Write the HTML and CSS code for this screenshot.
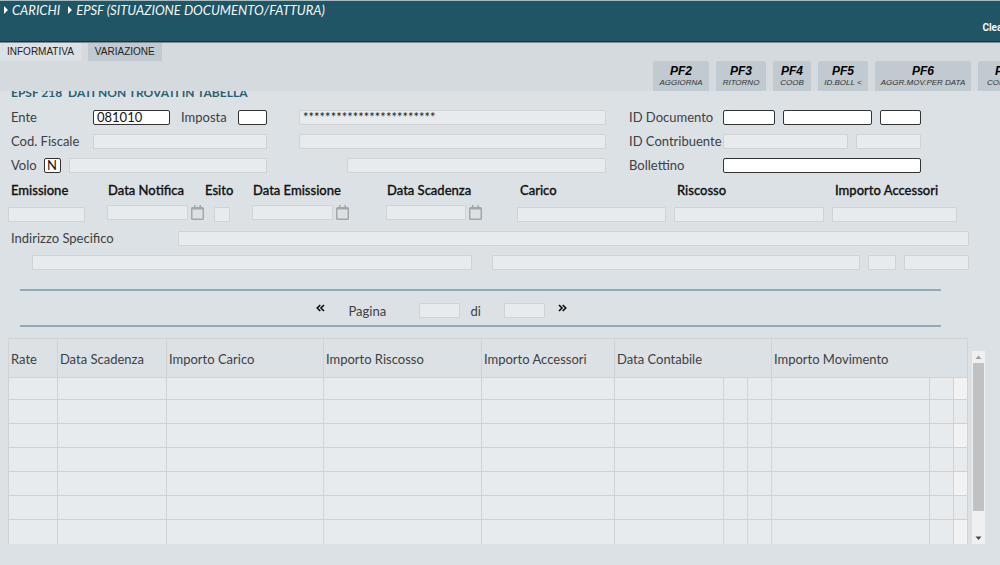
FILE: index.html
```
<!DOCTYPE html>
<html lang="it">
<head>
<meta charset="utf-8">
<title>EPSF - Situazione documento/fattura</title>
<link rel="stylesheet" href="styles.css">
</head>
<body>
<svg class="defs" aria-hidden="true">
  <symbol id="cal" viewBox="0 0 13 15">
    <path d="M3 0h1.500v2h4V0H10v2h1.500q1.500 0 1.500 1.500v10q0 1.500-1.500 1.500h-10Q0 15 0 13.500v-10Q0 2 1.500 2H3zM1.500 4.600v8.900h10V4.600z" fill="#a3a7aa" fill-rule="evenodd"/>
  </symbol>
  <symbol id="chev" viewBox="0 0 9 8">
    <path d="M4.300 1L1.300 4l3 3M8 1L5 4l3 3" fill="none" stroke="#111" stroke-width="1.700"/>
  </symbol>
</svg>

<header class="top">
  <nav class="crumbs" aria-label="Percorso">
    <span class="crumb">CARICHI</span>
    <span class="crumb">EPSF (SITUAZIONE DOCUMENTO/FATTURA)</span>
  </nav>
  <button class="clear" type="button">Clear</button>
</header>

<div class="band">
  <div class="tabs">
    <button class="tab active" type="button">INFORMATIVA</button>
    <button class="tab" type="button">VARIAZIONE</button>
  </div>
  <div class="keys">
    <button class="key k56" type="button"><b>PF2</b><span>AGGIORNA</span></button>
    <button class="key k50" type="button"><b>PF3</b><span>RITORNO</span></button>
    <button class="key k38" type="button"><b>PF4</b><span>COOB</span></button>
    <button class="key k50" type="button"><b>PF5</b><span>ID.BOLL &lt;</span></button>
    <button class="key k96" type="button"><b>PF6</b><span>AGGR.MOV.PER DATA</span></button>
    <button class="key k56" type="button"><b>PF7</b><span>CONTRIB.</span></button>
  </div>
</div>

<main class="content">
  <h1 class="message">EPSF 218 &nbsp;DATI NON TROVATI IN TABELLA</h1>

  <form class="form">
    <div class="search">
      <div class="cell left">
        <label class="wide-label" for="ente">Ente</label>
        <input class="f77 edit" id="ente" value="081010">
        <label class="imposta" for="imposta">Imposta</label>
        <input class="f29 edit" id="imposta">
      </div>
      <div class="cell mid"><input class="grow" aria-label="Descrizione imposta" value="************************" readonly></div>
      <div class="cell right">
        <label class="right-label" for="doc1">ID Documento</label>
        <input class="f52 edit" id="doc1">
        <input class="grow edit" aria-label="Numero documento">
        <input class="f41 edit" aria-label="Progressivo documento">
      </div>

      <div class="cell left">
        <label class="wide-label" for="cf">Cod. Fiscale</label>
        <input class="grow" id="cf" readonly>
      </div>
      <div class="cell mid"><input class="grow" aria-label="Nominativo" readonly></div>
      <div class="cell right">
        <label class="right-label" for="contr">ID Contribuente</label>
        <input class="grow" id="contr" readonly>
        <input class="f65" aria-label="Codice contribuente" readonly>
      </div>

      <div class="cell left">
        <label class="volo" for="volo">Volo</label>
        <input class="f17 edit" id="volo" value="N">
        <input class="grow" aria-label="Descrizione volo" readonly>
      </div>
      <div class="cell mid indent"><input class="grow" aria-label="Dettaglio volo" readonly></div>
      <div class="cell right">
        <label class="right-label" for="boll">Bollettino</label>
        <input class="grow edit" id="boll">
      </div>
    </div>

    <div class="totals">
      <div class="field low"><label for="em">Emissione</label><div class="box trail-22"><input class="grow" id="em" readonly></div></div>
      <div class="field date"><label for="dn">Data Notifica</label><div class="box"><input class="grow" id="dn" readonly><svg class="cal"><use href="#cal"/></svg></div></div>
      <div class="field low esito"><label for="es">Esito</label><div class="box trail-22"><input class="grow" id="es" readonly></div></div>
      <div class="field date"><label for="de">Data Emissione</label><div class="box trail-37"><input class="grow" id="de" readonly><svg class="cal"><use href="#cal"/></svg></div></div>
      <div class="field date"><label for="ds">Data Scadenza</label><div class="box trail-35"><input class="grow" id="ds" readonly><svg class="cal"><use href="#cal"/></svg></div></div>
      <div class="field low"><label for="ca">Carico</label><div class="box trail-8"><input class="grow" id="ca" readonly></div></div>
      <div class="field low"><label for="ri">Riscosso</label><div class="box trail-8"><input class="grow" id="ri" readonly></div></div>
      <div class="field low"><label for="ia">Importo Accessori</label><div class="box"><input class="grow" id="ia" readonly></div></div>
    </div>

    <div class="address">
      <label for="ind">Indirizzo Specifico</label>
      <input class="grow" id="ind" readonly>
    </div>
    <div class="address second">
      <input class="street" aria-label="Indirizzo" readonly>
      <input class="city" aria-label="Comune" readonly>
      <input class="f28" aria-label="Provincia" readonly>
      <input class="f65" aria-label="CAP" readonly>
    </div>
  </form>

  <div class="pager">
    <button class="arrow" type="button" aria-label="Pagina precedente"><svg><use href="#chev"/></svg></button>
    <label class="pag" for="pag">Pagina</label><input class="f41" id="pag" readonly>
    <label class="di" for="tot">di</label><input class="f41" id="tot" readonly>
    <button class="arrow next" type="button" aria-label="Pagina successiva"><svg><use href="#chev"/></svg></button>
  </div>

  <div class="grid">
    <table class="rates">
      <colgroup>
        <col style="width:5.100%"><col style="width:11.370%"><col style="width:16.370%"><col style="width:16.480%"><col style="width:13.870%">
        <col style="width:11.370%"><col style="width:2.500%"><col style="width:2.500%"><col style="width:16.480%"><col style="width:2.500%"><col style="width:1.460%">
      </colgroup>
      <thead>
        <tr><th>Rate</th><th>Data Scadenza</th><th>Importo Carico</th><th>Importo Riscosso</th><th>Importo Accessori</th><th colspan="3">Data Contabile</th><th colspan="3">Importo Movimento</th></tr>
      </thead>
      <tbody>
        <tr><td></td><td></td><td></td><td></td><td></td><td></td><td></td><td></td><td></td><td></td><td></td></tr>
        <tr><td></td><td></td><td></td><td></td><td></td><td></td><td></td><td></td><td></td><td></td><td></td></tr>
        <tr><td></td><td></td><td></td><td></td><td></td><td></td><td></td><td></td><td></td><td></td><td></td></tr>
        <tr><td></td><td></td><td></td><td></td><td></td><td></td><td></td><td></td><td></td><td></td><td></td></tr>
        <tr><td></td><td></td><td></td><td></td><td></td><td></td><td></td><td></td><td></td><td></td><td></td></tr>
        <tr><td></td><td></td><td></td><td></td><td></td><td></td><td></td><td></td><td></td><td></td><td></td></tr>
        <tr><td></td><td></td><td></td><td></td><td></td><td></td><td></td><td></td><td></td><td></td><td></td></tr>
      </tbody>
    </table>
    <div class="scroll" aria-hidden="true">
      <svg class="tri" viewBox="0 0 13 12"><path d="M3.500 8L6.500 4.500 9.500 8z" fill="#a0a0a0"/></svg>
      <div class="track"><div class="thumb"></div></div>
      <svg class="tri" viewBox="0 0 13 12"><path d="M3.500 4.500L6.500 8 9.500 4.500z" fill="#484848"/></svg>
    </div>
  </div>
</main>
</body>
</html>
```
FILE: styles.css
```
* { box-sizing: border-box; }

body {
  margin: 0;
  overflow: hidden;
  background: #dce1e5;
  color: #3c4043;
  font: 13px/16px Lato, "Open Sans", sans-serif;
}

button { border: 0; padding: 0; background: none; color: inherit; font: inherit; white-space: nowrap; }

.defs { display: none; }

/* header */
.top {
  display: flex;
  justify-content: space-between;
  height: 43px;
  border-top: 1px solid #a9b9bd;
  border-bottom: 1px solid #7f8a90;
  background: #205565;
  box-shadow: inset 0 -1px #123642;
  color: #f4f7f8;
}
.crumbs { display: flex; gap: 8px; padding: 1px 0 0 4px; font-style: italic; }
.crumb { display: flex; align-items: center; gap: 4px; height: 16px; }
.crumb::before {
  content: "";
  border-left: 4px solid #fff;
  border-top: 4px solid transparent;
  border-bottom: 4px solid transparent;
}
.clear { margin: 19px -6px 0 0; height: 16px; font: bold 10px/16px Roboto, sans-serif; }

/* tabs and function keys */
.band { background: #d5dade; }
.tabs { display: flex; gap: 7px; height: 18px; }
.tab {
  height: 18px;
  padding: 0 7px;
  background: #c1c9d1;
  color: #222;
  font: 10px/18px "Liberation Sans", sans-serif;
}
.tab.active { background: #dce1e5; }
.keys { display: flex; justify-content: flex-end; gap: 7px; margin-right: -34px; }
.key {
  display: flex;
  flex: none;
  flex-direction: column;
  align-items: center;
  height: 30px;
  padding-top: 3px;
  border-radius: 3px 3px 0 0;
  background: #c1c9d1;
  color: #333;
  font: italic 8px/10px "Liberation Sans", sans-serif;
}
.key b { color: #000; font-size: 12px; line-height: 14px; }
.k38 { width: 38px; }
.k50 { width: 50px; }
.k56 { width: 56px; }
.k96 { width: 96px; }

/* form */
.content { overflow: hidden; }
.message {
  margin: -6px 0 0 11px;
  color: #2c5f70;
  font-size: 12px;
  font-weight: bold;
  line-height: 16px;
}
input {
  min-width: 0;
  height: 15px;
  padding: 0 3px;
  border: 1px solid #d0d2d3;
  border-radius: 1px;
  background: #e7ebee;
  color: #222;
  font: 13px/13px Lato, "Open Sans", sans-serif;
}
input.edit { border-color: #333; border-radius: 2px; background: #fff; color: #111; }
.grow { flex: 1 1 0; width: 0; }
.f17 { width: 17px; padding: 0 2px; }
.f28 { width: 28px; }
.f29 { width: 29px; }
.f41 { width: 41px; }
.f52 { width: 52px; }
.f65 { width: 65px; }
.f77 { width: 77px; }

.form { padding: 4px 31px 0 11px; }
.search {
  display: grid;
  grid-template-columns: 256fr 316fr 292fr;
  gap: 0 23px;
  padding-right: 48px;
}
.cell { display: flex; align-items: center; height: 24px; }
.left .wide-label { width: 82px; }
.imposta { width: 57px; margin-left: auto; }
.volo { width: 33px; }
.left .f17 { margin-right: 8px; }
.mid { padding-left: 9px; }
.mid.indent { padding-left: 57px; }
.right { gap: 8px; }
.right-label { width: 86px; white-space: nowrap; }

.totals {
  display: grid;
  grid-template-columns: 99fr 97fr 48fr 134fr 131fr 157fr 158fr 125fr;
  margin: 5px 12px 0 -3px;
  color: #111;
}
.totals label { display: block; white-space: nowrap; font-weight: 500; -webkit-text-stroke: 0.3px #111; }
.low label { padding-left: 3px; }
.date label { padding-left: 1px; }
.esito label { padding-left: 1px; }
.esito .box { padding-left: 10px; }
.box { display: flex; height: 17px; margin-top: 7px; }
.low .box { padding-top: 2px; }
.box.trail-8 { padding-right: 8px; }
.box.trail-22 { padding-right: 22px; }
.box.trail-35 { padding-right: 35px; }
.box.trail-37 { padding-right: 37px; }
.cal { flex: none; width: 13px; height: 15px; margin-left: 3px; }

.address { display: flex; align-items: center; gap: 8px; height: 24px; margin-top: 4px; }
.address label { width: 159px; }
.address.second { margin-top: 0; padding-left: 21px; }
.street { flex: 441 1 0; margin-right: 12px; }
.city { flex: 367 1 0; }

/* pager */
.pager {
  display: flex;
  align-items: center;
  justify-content: center;
  height: 38px;
  margin: 15px 59px 0 20px;
  padding: 5px 79px 0 0;
  border-top: 2px solid #8fabb8;
  border-bottom: 2px solid #8fabb8;
}
.arrow { height: 16px; }
.arrow svg { display: block; width: 9px; height: 8px; margin-bottom: 6px; }
.arrow.next svg { transform: scaleX(-1); }
.pag { width: 70px; margin-left: 24px; }
.di { width: 33px; margin-left: 11px; }
.arrow.next { margin-left: 13px; }

/* rates table */
.grid { display: flex; align-items: flex-end; gap: 4px; margin: 11px 15px 0 8px; }
.rates { flex: 1; width: 0; table-layout: fixed; border-collapse: collapse; }
.rates th {
  height: 39px;
  padding: 2px 0 0 2px;
  border: 1px solid #d0d2d3;
  text-align: left;
  font-weight: normal;
  white-space: nowrap;
}
.rates td { height: 24px; padding: 0; border: 1px solid #d0d2d3; background: #e7ebee; }
.rates tbody tr:first-child td { height: 22px; }
.rates tbody tr:last-child td { border-bottom: 0; }
.rates tr:nth-child(odd) td:last-child { background: #f2f2f2; }

.scroll { display: flex; flex-direction: column; align-self: stretch; width: 13px; margin-top: 13px; background: #f0f0f0; }
.tri { width: 13px; height: 12px; flex: none; }
.track { flex: 1; padding: 0 1px; }
.thumb { height: 88%; background: #c1c1c1; }
```
